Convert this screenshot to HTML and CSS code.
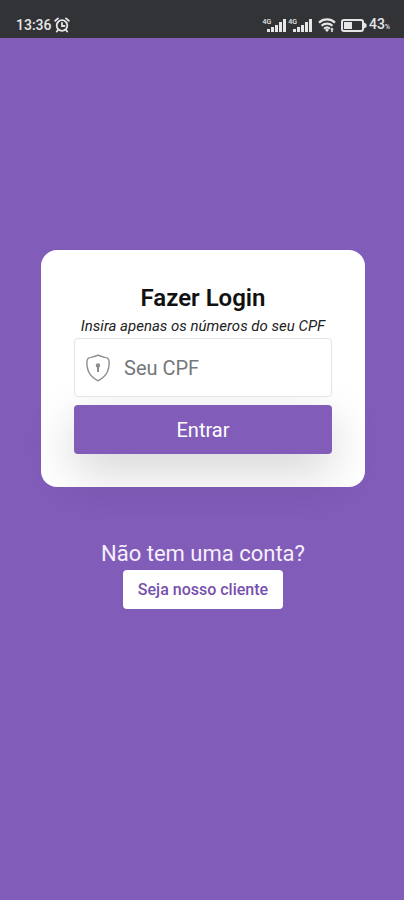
FILE: index.html
```html
<!DOCTYPE html>
<html lang="pt-BR">
<head>
<meta charset="utf-8">
<meta name="viewport" content="width=device-width, initial-scale=1">
<title>Fazer Login</title>
<link rel="stylesheet" href="styles.css">
</head>
<body>
<header class="status">
  <div class="status-group">
    <span>13:36</span>
    <svg class="alarm" width="16" height="16" viewBox="0 0 16 16" fill="none" stroke="currentColor" stroke-width="1.8" stroke-linecap="round" aria-hidden="true">
      <circle cx="8" cy="8.5" r="5.3"/>
      <path d="M8 6v3h2.5M1.2 3.8 4 1.4M14.8 3.8 12 1.4M4 13l-1.2 1.5M12 13l1.2 1.5"/>
    </svg>
  </div>
  <div class="status-group">
    <span class="signal"><span class="net">4G</span>
      <svg width="20" height="13" viewBox="0 0 20 13" fill="currentColor" aria-hidden="true"><path d="M0 10h3v3H0zM4 8h3v5H4zM8 6h3v7H8zM12 3h3v10h-3zM16 0h3v13h-3z"/></svg>
    </span>
    <span class="signal"><span class="net">4G</span>
      <svg width="20" height="13" viewBox="0 0 20 13" fill="currentColor" aria-hidden="true"><path d="M0 10h3v3H0zM4 8h3v5H4zM8 6h3v7H8zM12 3h3v10h-3zM16 0h3v13h-3z"/></svg>
    </span>
    <svg class="wifi" width="18" height="14" viewBox="0 0 18 14" fill="none" stroke="currentColor" stroke-width="2.2" aria-hidden="true">
      <path d="M1 4.6C5.5.4 12.5.4 17 4.6M3.500 7.800c3.200-2.900 7.800-2.900 11 0M6 10.800c1.800-1.600 4.200-1.600 6 0"/>
      <path d="M9 10.500 11 12 9 14 7 12zM14 9.500l1.800 2h-1v2.500h-1.600v-2.500h-1z" fill="currentColor" stroke="none"/>
    </svg>
    <svg class="battery" width="26" height="13" viewBox="0 0 26 13" aria-hidden="true">
      <rect x="1" y="1" width="21" height="11" rx="2" fill="none" stroke="currentColor" stroke-width="2"/>
      <rect x="3" y="3" width="8" height="7" fill="currentColor"/>
      <path d="M23 3.500 25.500 5v3L23 9.500z" fill="currentColor"/>
    </svg>
    <span>43<small class="percent">%</small></span>
  </div>
</header>
<main class="page">
  <form class="card">
    <h1 class="title">Fazer Login</h1>
    <label class="hint" for="cpf">Insira apenas os números do seu CPF</label>
    <div class="field">
      <svg class="shield" width="24" height="28" viewBox="0 0 24 28" fill="none" stroke="currentColor" stroke-width="1.4" stroke-linejoin="round" aria-hidden="true">
        <path d="M12 1.200C9.500 2.500 5 3.200 2.200 4.200.2 6 .4 12 2.500 17.500 4.500 22 8.500 25 12 26.800 15.500 25 19.500 22 21.500 17.500 23.600 12 23.800 6 21.800 4.200 19 3.200 14.500 2.500 12 1.200z"/>
        <circle cx="12" cy="11.500" r="2.200" fill="currentColor" stroke="none"/>
        <path d="M12 12v6" stroke-width="2"/>
      </svg>
      <input class="input" id="cpf" type="text" inputmode="numeric" placeholder="Seu CPF">
    </div>
    <button class="submit" type="submit">Entrar</button>
  </form>
  <section class="signup">
    <p class="question">Não tem uma conta?</p>
    <a class="join" href="#cadastro">Seja nosso cliente</a>
  </section>
</main>
</body>
</html>
```
FILE: styles.css
```css
* {
  box-sizing: border-box;
}

body {
  margin: 0;
  min-height: 100vh;
  background: #815cb9;
  font-family: Roboto, "Liberation Sans", sans-serif;
}

.status {
  height: 38px;
  padding: 12px 14px 0 16px;
  display: flex;
  justify-content: space-between;
  background: #323337;
  color: #e6e6e6;
  font-size: 14px;
  font-weight: 500;
  line-height: 26px;
}

.status-group {
  display: flex;
  align-items: center;
  height: 26px;
}

.alarm {
  margin-left: 2px;
}

.signal {
  display: flex;
  align-items: center;
  margin-right: 1px;
}

.net {
  font-size: 7px;
  line-height: 8px;
  align-self: flex-start;
  margin: 0 -4px 6px 0;
}

.wifi {
  margin: 0 5px 0 4px;
}

.battery {
  margin-right: 2px;
}

.percent {
  font-size: 7px;
}

.page {
  padding: 212px 39px 40px 41px;
}

.card {
  display: flex;
  flex-direction: column;
  padding: 32px 33px 33px;
  border-radius: 16px;
  background: #fff;
}

.title {
  margin: 0;
  font-size: 24px;
  font-weight: 600;
  line-height: 32px;
  text-align: center;
  color: #111;
}

.hint {
  font-size: 15px;
  font-style: italic;
  line-height: 24px;
  text-align: center;
  color: #222;
}

.field {
  display: flex;
  align-items: center;
  height: 59px;
  padding-left: 11px;
  border: 1px solid #e4e4e6;
  border-radius: 4px;
  background: #fff;
  color: #8b8d90;
  position: relative;
  z-index: 1;
}

.shield {
  flex: none;
}

.input {
  flex: 1;
  min-width: 0;
  height: 100%;
  padding: 0 14px;
  border: 0;
  outline: 0;
  background: none;
  font: inherit;
  font-size: 20px;
  color: #333;
}

.input::placeholder {
  color: #74777b;
  opacity: 1;
}

.submit {
  height: 49px;
  margin-top: 8px;
  padding: 0;
  border: 0;
  border-radius: 4px;
  background: #815cb9;
  box-shadow: 0 16px 48px rgba(0, 0, 0, 0.18);
  font: inherit;
  font-size: 20px;
  color: #fff;
}

.signup {
  display: flex;
  flex-direction: column;
  align-items: center;
  margin-top: 51px;
}

.question {
  margin: 0;
  font-size: 22px;
  line-height: 32px;
  color: #f6effc;
}

.join {
  padding: 0 15px;
  border-radius: 4px;
  background: #fff;
  font-size: 16px;
  font-weight: 500;
  line-height: 39px;
  text-decoration: none;
  color: #7650ae;
}
```
